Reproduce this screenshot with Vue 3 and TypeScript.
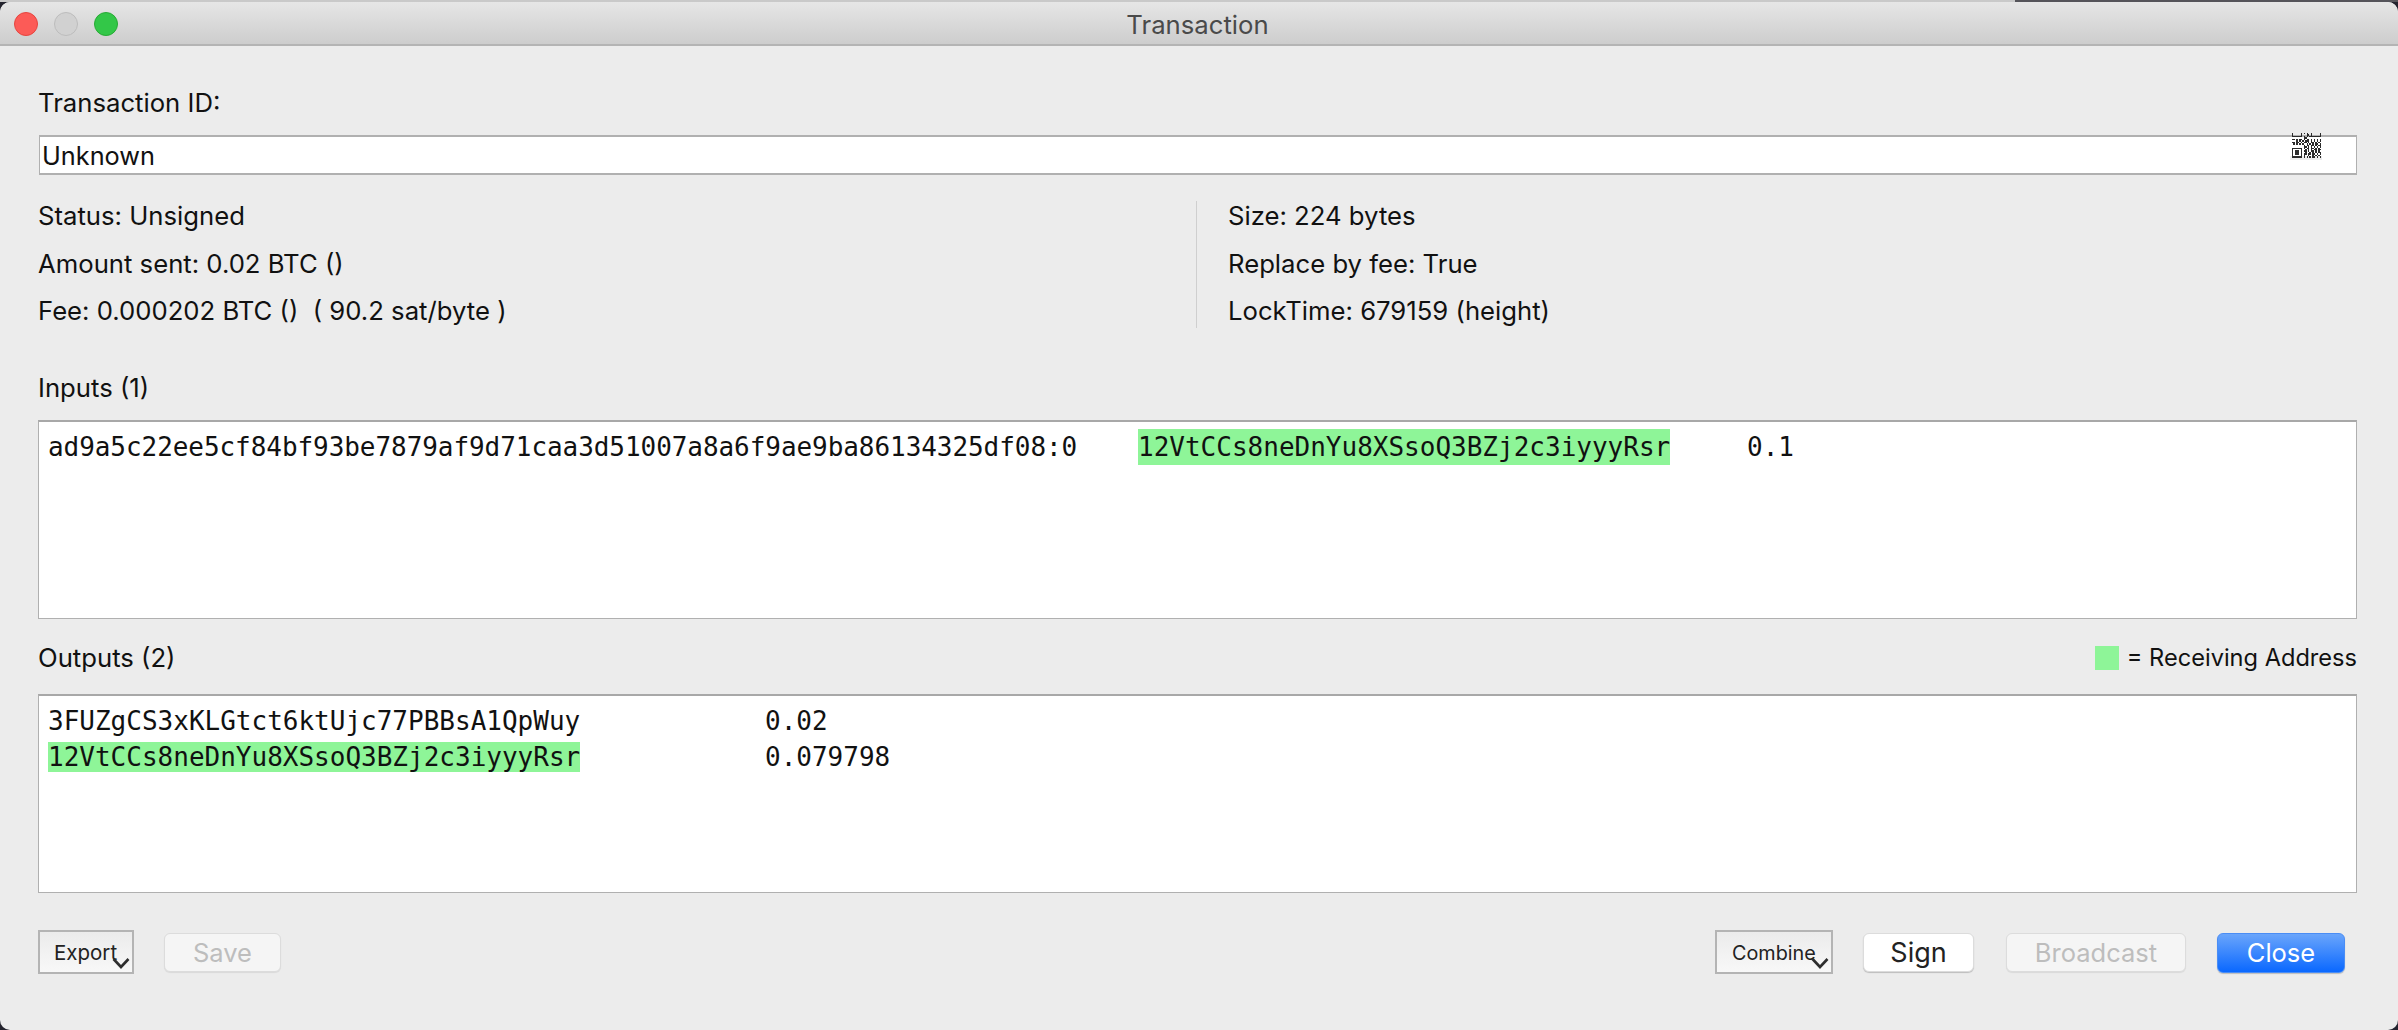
<script setup lang="ts">
interface Row { text: string }
const leftRows: Row[] = [
  { text: 'Status: Unsigned' },
  { text: 'Amount sent: 0.02 BTC ()' },
  { text: 'Fee: 0.000202 BTC ()  ( 90.2 sat/byte )' }
]
const rightRows: Row[] = [
  { text: 'Size: 224 bytes' },
  { text: 'Replace by fee: True' },
  { text: 'LockTime: 679159 (height)' }
]
const qr: string[] = [
  '1.....1.1.1..1.....1',
  '1.....1...11.1.....1',
  '1111111.1.1.11111111',
  '........11..........',
  '11.1.11.1.11.1.1.1.1',
  '...1.1.1.111.1.1.1.1',
  '11.11.1.11.1.11.1.1.',
  '.1.1.1.1..1.1.1.11.1',
  '........1.11.11.1.11',
  '........11.1.1.1.1.1',
  '1111111.1.11.11.1.1.',
  '1.....1..1.1.1.11.11',
  '1.111.1.11.1.11.1.1.',
  '1.111.1..1..1.1.1.11',
  '1.111.1.11.11.11.1.1',
  '1.....1.1..1..1.1.1.',
  '1111111.1.1.1.11.1.1'
]
const cells = qr.flatMap((row, y) =>
  row.split('').flatMap((c, x) => (c === '1' ? [{ x, y }] : []))
)
</script>

<template>
  <div class="screen">
    <div class="window">
      <header class="titlebar">
        <div class="lights">
          <span class="light red"></span>
          <span class="light grey"></span>
          <span class="light green"></span>
        </div>
        <div class="title">Transaction</div>
      </header>

      <main class="content">
        <div class="label txid-label">Transaction ID:</div>
        <div class="txid">
          <span>Unknown</span>
          <svg class="qr" viewBox="0 0 32 27" shape-rendering="crispEdges">
            <rect x="0" y="23" width="32" height="4" fill="#ececec" />
            <g transform="translate(2 0) scale(1.45)">
              <rect v-for="c in cells" :key="c.x + '-' + c.y" :x="c.x" :y="c.y" width="1" height="1" fill="#2b2b2b" />
            </g>
          </svg>
        </div>

        <section class="info">
          <div class="info-col left">
            <div v-for="r in leftRows" :key="r.text" class="label">{{ r.text }}</div>
          </div>
          <div class="info-col right">
            <div v-for="r in rightRows" :key="r.text" class="label">{{ r.text }}</div>
          </div>
        </section>

        <div class="label inputs-label">Inputs (1)</div>
        <div class="box inputs-box mono">
          <div class="line">
            <span class="c-prevout">ad9a5c22ee5cf84bf93be7879af9d71caa3d51007a8a6f9ae9ba86134325df08:0</span>
            <span class="c-in-addr hl">12VtCCs8neDnYu8XSsoQ3BZj2c3iyyyRsr</span>
            <span class="c-in-val">0.1</span>
          </div>
        </div>

        <div class="outputs-head">
          <div class="label">Outputs (2)</div>
          <div class="legend"><span class="swatch"></span><span>= Receiving Address</span></div>
        </div>
        <div class="box mono">
          <div class="line">
            <span class="c-out-addr">3FUZgCS3xKLGtct6ktUjc77PBBsA1QpWuy</span>
            <span>0.02</span>
          </div>
          <div class="line">
            <span class="c-out-addr"><span class="hl">12VtCCs8neDnYu8XSsoQ3BZj2c3iyyyRsr</span></span>
            <span>0.079798</span>
          </div>
        </div>

        <footer class="actions">
          <div class="menu-btn export">Export
            <svg class="chev" viewBox="0 0 18 12"><path d="M1.5 2 L9 10 L16.5 2" fill="none" stroke="#2e2e2e" stroke-width="2.6" /></svg>
          </div>
          <button class="btn disabled save">Save</button>
          <div class="spacer"></div>
          <div class="menu-btn combine">Combine
            <svg class="chev" viewBox="0 0 18 12"><path d="M1.5 2 L9 10 L16.5 2" fill="none" stroke="#2e2e2e" stroke-width="2.6" /></svg>
          </div>
          <button class="btn sign">Sign</button>
          <button class="btn disabled broadcast">Broadcast</button>
          <button class="btn primary close">Close</button>
        </footer>
      </main>
    </div>
  </div>
</template>

<style>
html, body { margin: 0; background: #ececec; }
</style>

<style scoped>
.screen {
  width: 2398px;
  height: 1030px;
  padding-top: 2px;
  box-sizing: border-box;
  overflow: hidden;
  background:
    linear-gradient(to right, #c9c9c9 2015px, #55545a 2015px) top / 100% 2px no-repeat,
    #23232e;
}
.window {
  height: 1028px;
  border-radius: 10px;
  background: #ececec;
  overflow: hidden;
  display: flex;
  flex-direction: column;
  font-family: Inter, "Liberation Sans", sans-serif;
  color: #111;
}
.titlebar {
  height: 44px;
  flex: none;
  box-sizing: border-box;
  border-bottom: 2px solid #b4b4b4;
  background: linear-gradient(#e6e6e6, #cdcdcd);
  position: relative;
  display: flex;
  align-items: center;
  justify-content: center;
}
.lights {
  position: absolute;
  left: 14px;
  top: 10px;
  display: flex;
  gap: 16px;
}
.light {
  width: 24px;
  height: 24px;
  border-radius: 50%;
  box-sizing: border-box;
  border: 1px solid;
}
.red { background: #fc5b57; border-color: #e5453f; }
.grey { background: #d1d1d1; border-color: #bcbcbc; }
.green { background: #33c748; border-color: #27aa35; }
.title {
  font-size: 25.7px;
  color: #4a4a4a;
  margin-top: 2px;
  margin-right: 3px;
}
.content {
  flex: 1;
  padding: 0 41px 0 38px;
  display: flex;
  flex-direction: column;
}
.label {
  font-size: 25.7px;
  line-height: 30px;
  white-space: pre;
}
.txid-label { margin-top: 42px; }
.txid {
  margin-top: 17px;
  margin-left: 1px;
  height: 40px;
  box-sizing: border-box;
  border: 1px solid #b0b0b0;
  border-width: 2px 1px;
  background: #fff;
  font-size: 25.3px;
  line-height: 38px;
  padding-left: 2px;
  position: relative;
}
.qr {
  position: absolute;
  left: 2250px;
  top: -4px;
  width: 32px;
  height: 27px;
}
.info {
  margin-top: 26px;
  display: flex;
  align-items: stretch;
}
.info-col {
  display: flex;
  flex-direction: column;
  gap: 17.5px;
  height: 127px;
  box-sizing: border-box;
}
.left {
  width: 1159px;
  border-right: 1px solid #cfcfcf;
}
.right { padding-left: 31px; }
.inputs-label { margin-top: 45px; }
.box {
  height: 199px;
  box-sizing: border-box;
  border: 1px solid #b0b0b0;
  border-top: 2px solid #a8a8a8;
  background: #fff;
  padding: 7px 9px;
  flex: none;
}
.inputs-box { margin-top: 17px; }
.mono {
  font-family: "DejaVu Sans Mono", monospace;
  font-size: 26px;
  color: #111;
}
.line {
  display: flex;
  height: 36px;
  line-height: 36px;
  white-space: pre;
}
.hl { background: #8ef598; }
.c-prevout { width: 1090px; letter-spacing: -0.06px; }
.c-in-addr { width: 532px; }
.c-in-val { margin-left: 77px; }
.c-out-addr { width: 717px; }
.outputs-head {
  margin-top: 24px;
  margin-bottom: 21px;
  display: flex;
  justify-content: space-between;
  align-items: center;
  height: 30px;
}
.legend {
  display: flex;
  align-items: center;
  gap: 8px;
  font-size: 23.6px;
  line-height: 30px;
}
.swatch {
  width: 24px;
  height: 24px;
  background: #8ef598;
}
.actions {
  margin-top: 37px;
  padding-right: 12px;
  display: flex;
  align-items: flex-start;
  height: 44px;
}
.spacer { flex: 1; }
.menu-btn {
  height: 44px;
  box-sizing: border-box;
  border: 2px solid #b4b4b4;
  background: linear-gradient(#ebebeb, #f8f8f8);
  font-size: 20.5px;
  line-height: 42px;
  color: #222;
  position: relative;
  padding-left: 14px;
}
.export { width: 96px; }
.combine { width: 118px; padding-left: 15px; font-size: 19.8px; }
.chev {
  position: absolute;
  right: 2px;
  bottom: 3px;
  width: 18px;
  height: 12px;
}
.btn {
  margin-top: 3px;
  height: 39px;
  box-sizing: border-box;
  border: 1px solid #dcdcdc;
  border-radius: 6px;
  font-family: inherit;
  font-size: 25.5px;
  line-height: 1;
  padding: 0;
  background: #fff;
  color: #222;
  box-shadow: 0 1px 1px rgba(0, 0, 0, 0.2);
}
.disabled {
  background: #f5f5f5;
  color: #bdbdbd;
  box-shadow: 0 1px 1px rgba(0, 0, 0, 0.08);
}
.primary {
  background: linear-gradient(#6aa5fb, #0a68ff);
  border-color: #4a8df5;
  color: #fff;
  height: 40px;
}
.save { width: 117px; margin-left: 30px; }
.sign { width: 111px; margin-left: 30px; font-size: 27px; }
.broadcast { width: 180px; margin-left: 32px; }
.close { width: 128px; margin-left: 31px; }
</style>
